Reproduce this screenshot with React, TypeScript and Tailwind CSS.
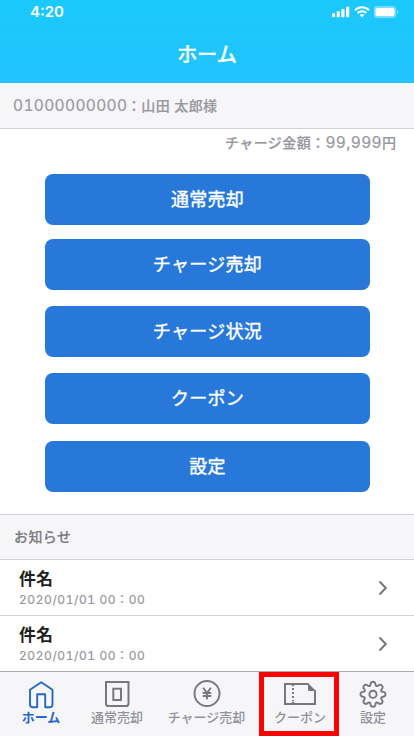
import type { ReactNode } from 'react';

interface MenuItem {
  label: string;
  className: string;
}

interface Notice {
  title: string;
  date: string;
  time: string;
}

interface Tab {
  label: string;
  icon: ReactNode;
  className: string;
  active?: boolean;
}

const menu: MenuItem[] = [
  { label: '通常売却', className: 'mt-[14px]' },
  { label: 'チャージ売却', className: 'mt-[14px]' },
  { label: 'チャージ状況', className: 'mt-4' },
  { label: 'クーポン', className: 'mt-4' },
  { label: '設定', className: 'mt-[17px]' },
];

const notices: Notice[] = [
  { title: '件名', date: '2020/01/01', time: '00：00' },
  { title: '件名', date: '2020/01/01', time: '00：00' },
];

// Eight-lobed outline of the settings gear
const gearPoints = Array.from({ length: 128 }, (_, i) => {
  const a = (i / 128) * Math.PI * 2;
  const r = 10.7 + 1.8 * Math.cos(8 * a);
  const t = a + 0.03 * Math.sin(16 * a) + 0.03 * Math.sin(8 * a);
  return `${(14 + r * Math.sin(t)).toFixed(2)},${(14.3 - r * Math.cos(t)).toFixed(2)}`;
}).join(' ');

function SignalIcon() {
  return (
    <svg width="18" height="12" viewBox="0 0 18 12" fill="white">
      <rect x="0" y="7.2" width="3.1" height="4.1" rx="0.8" />
      <rect x="4.7" y="5.2" width="3.1" height="6.1" rx="0.8" />
      <rect x="9.4" y="2.9" width="3.1" height="8.4" rx="0.8" />
      <rect x="14.1" y="0.4" width="3.1" height="10.9" rx="0.8" />
    </svg>
  );
}

function WifiIcon() {
  return (
    <svg width="16" height="12" viewBox="0 0 16 12" fill="none" stroke="white" strokeWidth="2">
      <path d="M1 4.2a10 10 0 0 1 14 0" />
      <path d="M3.6 7a6.3 6.3 0 0 1 8.8 0" />
      <path d="M5.7 9.1a3.3 3.3 0 0 1 4.6 0L8 11.4z" fill="white" stroke="none" />
    </svg>
  );
}

function BatteryIcon() {
  return (
    <svg width="25" height="12" viewBox="0 0 25 12">
      <rect x="0" y="0" width="22" height="12" rx="3" fill="white" fillOpacity="0.4" />
      <rect x="1.6" y="2" width="18.8" height="8" rx="1.4" fill="white" />
      <path d="M23 4v4a2.2 2.2 0 0 0 0-4z" fill="white" fillOpacity="0.5" />
    </svg>
  );
}

function HomeIcon() {
  return (
    <svg width="28" height="30" viewBox="0 0 28 30" fill="none" stroke="currentColor" strokeWidth="1.9" strokeLinejoin="round">
      <path d="M14.2 2.2 25.500 9.800v14.800a2.600 2.600 0 0 1-2.600 2.600h-4.700V14.300h-8v12.900H5.600A2.600 2.600 0 0 1 3 24.600V9.800z" />
    </svg>
  );
}

function SafeIcon() {
  return (
    <svg width="28" height="30" viewBox="0 0 28 30" fill="none" stroke="currentColor" strokeWidth="2">
      <path d="M3 2h22.500v21.400a2.600 2.600 0 0 1-2.600 2.600H5.600A2.600 2.600 0 0 1 3 23.400z" />
      <rect x="10.300" y="8.700" width="7.700" height="11.300" />
    </svg>
  );
}

function YenIcon() {
  return (
    <svg width="28" height="30" viewBox="0 0 28 30" fill="none" stroke="currentColor" strokeWidth="1.9">
      <circle cx="14" cy="13.5" r="12.500" />
      <path d="m10.200 7.700 3.800 5.400 3.800-5.400M14 12.800v6.500M9.700 13h8.600M9.700 16h8.600" />
    </svg>
  );
}

function CouponIcon() {
  return (
    <svg width="34" height="30" viewBox="0 0 34 30" fill="none" stroke="currentColor" strokeWidth="2">
      <path d="M25.500 4H2v20h30V10.500" />
      <path d="M25 3 33 11h-6.500a1.500 1.500 0 0 1-1.500-1.500z" fill="currentColor" stroke="none" />
      <path d="M8 4.500h4l-2 2.300zM8 23.500h4l-2-2.300z" fill="currentColor" stroke="none" />
      <path d="M10 8v13" strokeDasharray="2 2" />
    </svg>
  );
}

function GearIcon() {
  return (
    <svg width="28" height="30" viewBox="0 0 28 30" fill="none" stroke="currentColor" strokeWidth="1.9" strokeLinejoin="round">
      <circle cx="14" cy="14.3" r="3.6" />
      <polygon points={gearPoints} />
    </svg>
  );
}

const tabs: Tab[] = [
  { label: 'ホーム', icon: <HomeIcon />, className: 'w-[82px]', active: true },
  { label: '通常売却', icon: <SafeIcon />, className: 'w-[70px]' },
  { label: 'チャージ売却', icon: <YenIcon />, className: 'w-[109px]' },
  { label: 'クーポン', icon: <CouponIcon />, className: 'w-[78px]' },
  { label: '設定', icon: <GearIcon />, className: 'w-[68px]' },
];

function Header() {
  return (
    <header className="h-[83px] shrink-0 bg-linear-to-b from-[#1ac9fd] to-[#22c3fe] text-white">
      <div className="flex h-6 items-center justify-between pl-[30px] pr-[15px]">
        <span className="font-['Inter'] text-[15px] font-semibold leading-6">4:20</span>
        <div className="flex items-center gap-1">
          <SignalIcon />
          <WifiIcon />
          <BatteryIcon />
        </div>
      </div>
      <h1 className="mt-[15px] text-center text-[20px] leading-[32px] [-webkit-text-stroke:0.7px_white]">ホーム</h1>
    </header>
  );
}

function NoticeRow({ title, date, time }: Notice) {
  return (
    <li className="flex h-14 items-center justify-between border-b border-[#d4d4d8] pl-[19px] pr-[26px] last:border-b-0">
      <div className="pt-[2px]">
        <p className="text-[17px] font-bold leading-[22px] text-[#1f1f21]">{title}</p>
        <p className="font-['Inter','Noto_Sans_CJK_JP',sans-serif] text-[12px] leading-[18px] tracking-[0.57px] tabular-nums text-[#98989f] [-webkit-text-stroke:0.2px_#98989f]">
          {date} {time}
        </p>
      </div>
      <svg width="10" height="16" viewBox="0 0 10 16" fill="none" stroke="#77777e" strokeWidth="2">
        <path d="m1.500 1.500 6.300 6.500-6.300 6.500" />
      </svg>
    </li>
  );
}

function TabBar() {
  return (
    <nav className="relative flex h-[65px] shrink-0 border-t border-[#acacb2] bg-[#f6f6f9]">
      {tabs.map((tab) => (
        <div
          key={tab.label}
          className={`flex flex-col items-center pt-2 ${tab.className} ${tab.active ? 'text-[#2468c4]' : 'text-[#77777f]'}`}
        >
          {tab.icon}
          <span className={`whitespace-nowrap text-[13px] leading-[16px] ${tab.active ? 'font-bold' : 'font-medium text-[#919198]'}`}>
            {tab.label}
          </span>
        </div>
      ))}
      {/* Highlight around the coupon tab */}
      <div className="pointer-events-none absolute left-[259px] top-0 h-16 w-20 border-[5px] border-[#fe0000]" />
    </nav>
  );
}

export default function App() {
  return (
    <div className="flex h-[736px] w-[414px] flex-col overflow-hidden bg-white font-['Liberation_Sans','Noto_Sans_CJK_JP',sans-serif]">
      <Header />

      <div className="flex h-[46px] shrink-0 items-center border-b border-[#d1d1d6] bg-[#f6f6f9] pl-[13px] pt-[2px] text-[14px] font-medium text-[#98989f] [-webkit-text-stroke:0.2px_#98989f]">
        <span className="w-[114px] pb-px font-['Inter'] text-[15.5px] font-normal leading-5 tracking-[0.35px] tabular-nums">01000000000</span>
        <span className="tracking-[0.35px]">：山田 太郎様</span>
      </div>

      <main className="h-[385px] shrink-0">
        <p className="flex h-[29px] items-center justify-end pr-[18px] text-[14px] font-medium text-[#98989f] [-webkit-text-stroke:0.2px_#98989f]">
          <span className="tracking-[0.4px]">チャージ金額：</span>
          <span className="pb-0.5 font-['Inter'] text-[15.5px] font-normal leading-5 tracking-[0.35px] tabular-nums">99,999</span>
          <span>円</span>
        </p>
        <div className="mt-[2px] flex flex-col pl-[45px] pr-[44px]">
          {menu.map((item) => (
            <button
              key={item.label}
              className={`h-[51px] rounded-lg bg-[#2878da] pt-[2px] text-[18px] tracking-[0.3px] text-white [-webkit-text-stroke:0.4px_white] ${item.className}`}
            >
              {item.label}
            </button>
          ))}
        </div>
      </main>

      <section className="h-[157px] shrink-0">
        <h2 className="flex h-[46px] items-center border-y border-[#d1d1d6] bg-[#f6f6f9] pl-[14px] text-[14px] font-medium tracking-[0.4px] text-[#7c7c82] [-webkit-text-stroke:0.2px_#7c7c82]">
          お知らせ
        </h2>
        <ul>
          {notices.map((notice, idx) => (
            <NoticeRow key={idx} {...notice} />
          ))}
        </ul>
      </section>

      <TabBar />
    </div>
  );
}
